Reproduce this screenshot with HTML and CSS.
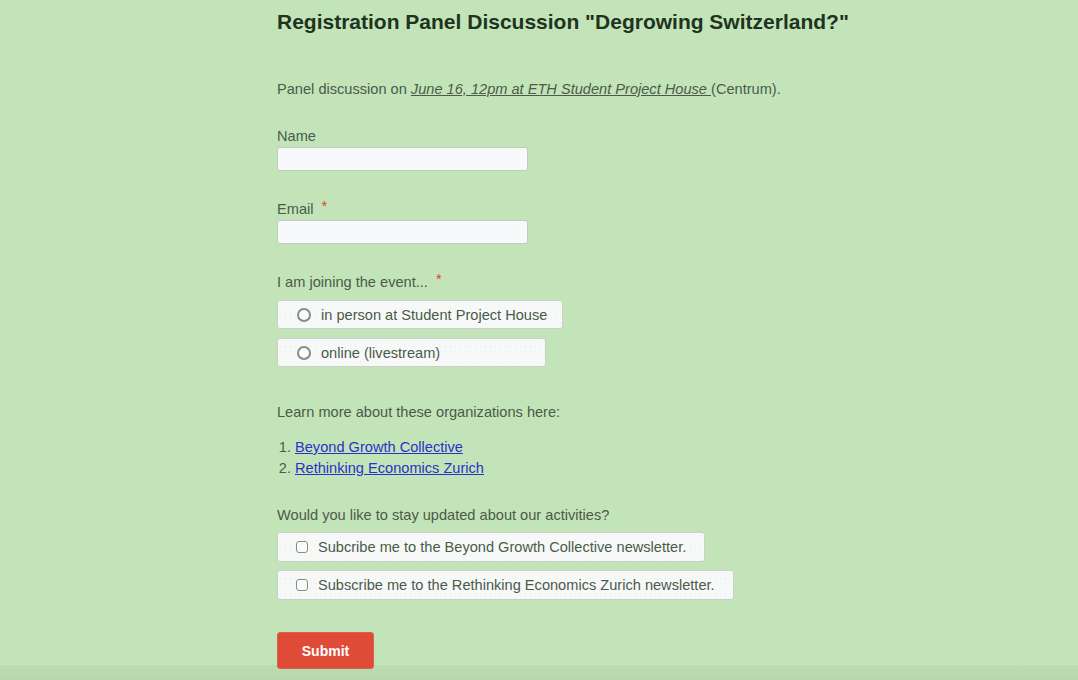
FILE: index.html
```html
<!DOCTYPE html>
<html lang="en">
<head>
<meta charset="utf-8">
<title>Registration Panel Discussion</title>
<link rel="stylesheet" href="styles.css">
</head>
<body>
<main class="form">
  <h1 class="title">Registration Panel Discussion "Degrowing Switzerland?"</h1>
  <p class="intro">Panel discussion on <a class="em-link" href="#">June 16, 12pm at ETH Student Project House </a>(Centrum).</p>

  <div class="field first">
    <label class="label">Name</label>
    <input class="text-input" type="text">
  </div>

  <div class="field">
    <label class="label">Email <span class="req">*</span></label>
    <input class="text-input" type="email">
  </div>

  <div class="field">
    <div class="label">I am joining the event... <span class="req">*</span></div>
    <div class="choices">
      <label class="choice"><span class="radio"></span>in person at Student Project House</label>
      <label class="choice wide"><span class="radio"></span>online (livestream)</label>
    </div>
  </div>

  <p class="text">Learn more about these organizations here:</p>
  <ol class="orgs">
    <li><a href="#">Beyond Growth Collective</a></li>
    <li><a href="#">Rethinking Economics Zurich</a></li>
  </ol>

  <div class="field updates">
    <div class="label">Would you like to stay updated about our activities?</div>
    <div class="choices checks">
      <label class="choice check"><span class="box"></span>Subcribe me to the Beyond Growth Collective newsletter.</label>
      <label class="choice check"><span class="box"></span>Subscribe me to the Rethinking Economics Zurich newsletter.</label>
    </div>
  </div>

  <button class="submit" type="button">Submit</button>
</main>
<div class="footer-shade"></div>
</body>
</html>
```

FILE: styles.css
```css
html, body {
  margin: 0;
  padding: 0;
  background: #c3e4b8;
  height: 100%;
  overflow: hidden;
}
body {
  font-family: "Liberation Sans", Arial, sans-serif;
  color: #4b5a4b;
  font-size: 14.6px;
}
.form {
  width: 640px;
  margin-left: 277px;
  padding-top: 10px;
  display: flex;
  flex-direction: column;
  align-items: flex-start;
}
.title {
  margin: 0;
  font-size: 21px;
  font-weight: bold;
  color: #1e3320;
  line-height: 24px;
}
.intro {
  margin: 45px 0 0;
  line-height: 20px;
}
.em-link {
  color: #4b5a4b;
  font-style: italic;
  text-decoration: underline;
}
.field {
  display: flex;
  flex-direction: column;
  align-items: flex-start;
  margin-top: 28px;
}
.field.first {
  margin-top: 27px;
}
.field.updates {
  margin-top: 26px;
}
.label {
  line-height: 20px;
  margin-bottom: 1px;
}
.req {
  color: #e0402f;
  margin-left: 4px;
  position: relative;
  top: -3px;
}
.text-input {
  width: 251px;
  height: 24px;
  box-sizing: border-box;
  border: 1px solid #c2cbc1;
  border-radius: 3px;
  background: #f8f9fb;
  margin: 0;
  padding: 0 6px;
}
.choices {
  display: flex;
  flex-direction: column;
  align-items: flex-start;
  gap: 9px;
  margin-top: 7px;
}
.choices.checks {
  gap: 8px;
  margin-top: 6px;
}
.choice {
  display: flex;
  align-items: center;
  height: 29px;
  box-sizing: border-box;
  border: 1px solid #c8d0c7;
  border-radius: 3px;
  background-color: #f7f9f8;
  background-image: radial-gradient(circle, #eaedea 0.6px, transparent 0.8px);
  background-size: 5px 5px;
  padding: 0 15px 0 19px;
  color: #4a5b4a;
}
.choice.wide {
  min-width: 269px;
}
.radio {
  width: 10px;
  height: 10px;
  border: 2px solid #809180;
  border-radius: 50%;
  margin-right: 10px;
  background: #fbfcfb;
}
.check {
  height: 30px;
  padding-left: 18px;
  padding-right: 18px;
}
.box {
  width: 10px;
  height: 10px;
  border: 1.5px solid #809180;
  border-radius: 3px;
  margin-right: 10px;
  background: #fbfcfb;
}
.text {
  margin: 35px 0 0;
  line-height: 20px;
}
.orgs {
  margin: 15px 0 0;
  padding-left: 18px;
  line-height: 21px;
}
.orgs a {
  color: #2b32c8;
  text-decoration: underline;
}
.submit {
  margin-top: 32px;
  width: 97px;
  height: 37px;
  background: #e04b37;
  color: #ffffff;
  font-family: "Liberation Sans", Arial, sans-serif;
  font-weight: bold;
  font-size: 14px;
  border: 1px solid #d9604f;
  border-radius: 3px;
  position: relative;
  z-index: 2;
}
.footer-shade {
  position: fixed;
  left: 0;
  right: 0;
  bottom: 0;
  height: 15px;
  background: linear-gradient(#bcdcb2, #b7d8ad);
  z-index: 1;
}
```
